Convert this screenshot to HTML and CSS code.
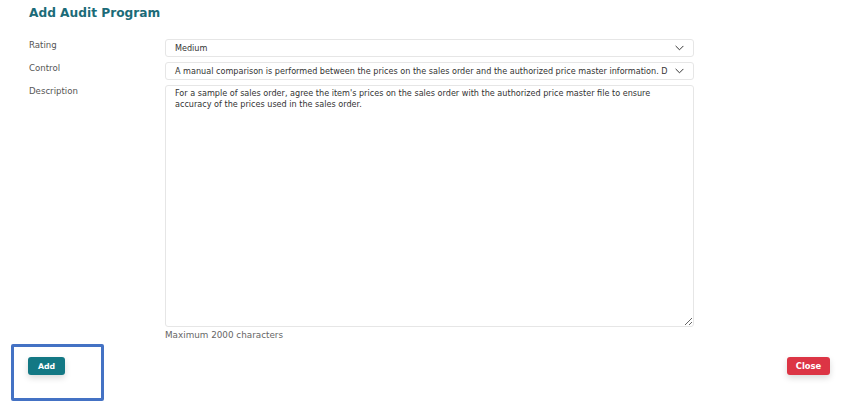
FILE: index.html
```html
<!DOCTYPE html>
<html lang="en">
<head>
  <meta charset="UTF-8">
  <title>Add Audit Program</title>
  <link rel="stylesheet" href="styles.css">
</head>
<body>
  <div class="modal">
    <h1 class="titulo">Add Audit Program</h1>

    <div class="form">
      <label class="rotulo">Rating</label>
      <div class="campo select">
        <span>Medium</span>
        <svg class="seta" viewBox="0 0 10 6" width="9" height="6"><path d="M1 1l4 4 4-4" fill="none" stroke="#333" stroke-width="1.1" stroke-linecap="round" stroke-linejoin="round"/></svg>
      </div>

      <label class="rotulo">Control</label>
      <div class="campo select">
        <span class="corte">A manual comparison is performed between the prices on the sales order and the authorized price master information. D</span>
        <svg class="seta" viewBox="0 0 10 6" width="9" height="6"><path d="M1 1l4 4 4-4" fill="none" stroke="#333" stroke-width="1.1" stroke-linecap="round" stroke-linejoin="round"/></svg>
      </div>

      <label class="rotulo">Description</label>
      <div>
        <textarea class="campo texto">For a sample of sales order, agree the item's prices on the sales order with the authorized price master file to ensure accuracy of the prices used in the sales order.</textarea>
        <p class="dica">Maximum 2000 characters</p>
      </div>
    </div>

    <div class="rodape">
      <div class="destaque">
        <button class="btn btn-add">Add</button>
      </div>
      <button class="btn btn-fechar">Close</button>
    </div>
  </div>
</body>
</html>
```

FILE: styles.css
```css
body {
  margin: 0;
  font-family: "DejaVu Sans", Arial, sans-serif;
  background-color: #fff;
  color: #333;
}

.modal {
  width: 854px;
  height: 405px;
  box-sizing: border-box;
  padding: 5px 24px 0 29px;
  display: flex;
  flex-direction: column;
}

.titulo {
  margin: 0;
  font-size: 12.2px;
  font-weight: bold;
  color: #1b6b78;
  line-height: 16px;
}

.form {
  margin-top: 18px;
  display: grid;
  grid-template-columns: 136px 529px;
  row-gap: 5px;
}

.rotulo {
  font-size: 8.6px;
  color: #555;
  line-height: 12px;
}

.campo {
  box-sizing: border-box;
  border: 1px solid #e6e6e6;
  border-radius: 3px;
  background: #fff;
  font-family: inherit;
  font-size: 8.1px;
  color: #333;
}

.select {
  height: 18px;
  padding: 0 9px 0 9px;
  display: flex;
  align-items: center;
  justify-content: space-between;
}

.corte {
  white-space: nowrap;
}

.seta {
  flex-shrink: 0;
}

.texto {
  display: block;
  width: 529px;
  height: 242px;
  padding: 2px 9px;
  line-height: 11px;
  resize: vertical;
}

.dica {
  margin: 3px 0 0;
  font-size: 8.8px;
  line-height: 11px;
  color: #666;
}

.rodape {
  margin-top: 3px;
  margin-left: -18px;
  display: flex;
  justify-content: space-between;
  align-items: flex-start;
}

.destaque {
  box-sizing: border-box;
  width: 93px;
  height: 57px;
  border: 3px solid #4472c4;
  border-radius: 2px;
  padding: 10px 0 0 14px;
  display: flex;
  align-items: flex-start;
}

.btn {
  border: none;
  border-radius: 3px;
  color: #fff;
  font-family: inherit;
  font-weight: bold;
  height: 18px;
  padding: 0;
  cursor: pointer;
  box-shadow: 0 3px 6px rgba(0, 0, 0, 0.15);
}

.btn-add {
  width: 37px;
  font-size: 7.8px;
  background-color: #137884;
}

.btn-fechar {
  width: 43px;
  font-size: 8.4px;
  font-weight: 600;
  background-color: #dc3545;
  margin-top: 13px;
}
```
